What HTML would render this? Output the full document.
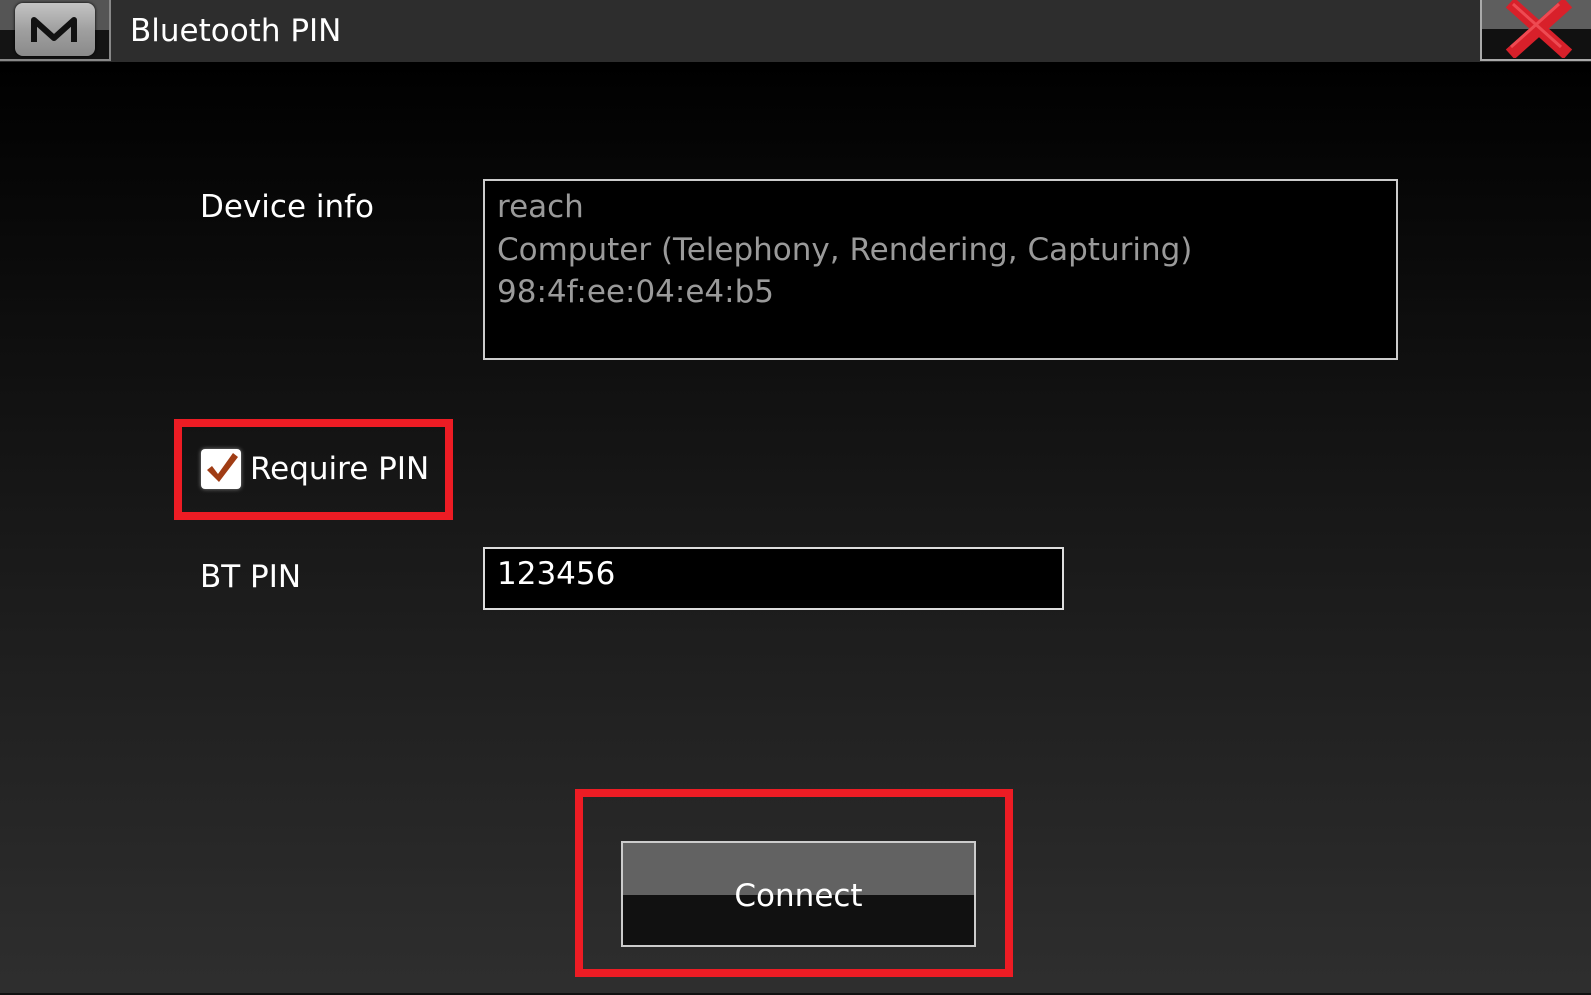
<!DOCTYPE html>
<html><head><style>
*{margin:0;padding:0;box-sizing:border-box}
body{width:1591px;height:995px;overflow:hidden;position:relative;background:linear-gradient(#000 62px,#050505 150px,#1c1c1c 600px,#2e2e2e 985px);font-family:"DejaVu Sans","Liberation Sans",sans-serif;color:#fff}
.abs{position:absolute}
.title{left:0;top:0;width:1591px;height:62px;background:#2d2d2d}
.lbl{font-size:31px;white-space:nowrap}
</style></head><body>
<div class="abs title"></div>
<div class="abs" style="left:0;top:0;width:111px;height:61px;background:linear-gradient(#555 0,#555 30px,#141414 30px);border-right:2px solid #888;border-bottom:2px solid #888"></div>
<div class="abs" style="left:15px;top:3px;width:80px;height:53px;border-radius:8px;background:linear-gradient(#c4c4c4,#a0a0a0 50%,#8a8a8a);box-shadow:0 0 3px #000"></div>
<svg class="abs" style="left:30px;top:16px" width="48" height="28" viewBox="0 0 48 28"><path d="M4 26 L4 4 L24 22 L44 4 L44 26" fill="none" stroke="#111" stroke-width="6" stroke-linejoin="round"/></svg>
<div class="abs lbl" style="left:130px;top:13px">Bluetooth PIN</div>
<div class="abs" style="left:1480px;top:0;width:111px;height:61px;background:linear-gradient(#5e5e5e 0,#5e5e5e 29px,#111 29px);border-left:2px solid #aaa;border-bottom:2px solid #aaa"></div>
<svg class="abs" style="left:1505px;top:0" width="70" height="58" viewBox="0 0 70 58"><g stroke="#d8202a" stroke-width="13" stroke-linecap="square"><line x1="10" y1="7" x2="58" y2="50"/><line x1="58" y1="7" x2="10" y2="50"/></g><g stroke="#ee4a52" stroke-width="3"><line x1="8" y1="4" x2="56" y2="47"/><line x1="54" y1="4" x2="6" y2="47"/></g></svg>

<div class="abs lbl" style="left:200px;top:189px">Device info</div>
<div class="abs" style="left:483px;top:179px;width:915px;height:181px;background:#000;border:2px solid #ccc"></div>
<div class="abs lbl" style="left:497px;top:186px;color:#9a9a9a;line-height:42.5px">reach<br>Computer (Telephony, Rendering, Capturing)<br>98:4f:ee:04:e4:b5</div>

<div class="abs" style="left:174px;top:419px;width:279px;height:101px;border:8px solid #ed1c24"></div>
<div class="abs" style="left:201px;top:449px;width:40px;height:40px;background:#fff;border-radius:4px;box-shadow:0 0 4px #888"></div>
<svg class="abs" style="left:203px;top:450px" width="38" height="36" viewBox="0 0 38 36"><path d="M4 20 L9 16 L15 24 L30 3 L35 7 L16 32 Z" fill="#a03c14"/></svg>
<div class="abs lbl" style="left:250px;top:451px">Require PIN</div>

<div class="abs lbl" style="left:200px;top:559px">BT PIN</div>
<div class="abs" style="left:483px;top:547px;width:581px;height:63px;background:#000;border:2px solid #ddd"></div>
<div class="abs lbl" style="left:497px;top:556px">123456</div>

<div class="abs" style="left:575px;top:789px;width:438px;height:188px;border:8px solid #ed1c24"></div>
<div class="abs" style="left:621px;top:841px;width:355px;height:106px;border:2px solid #ccc;background:linear-gradient(#626262 0,#626262 52px,#111 52px)"></div>
<div class="abs lbl" style="left:621px;top:878px;width:355px;text-align:center">Connect</div>
<div class="abs" style="left:0;top:993px;width:1591px;height:2px;background:#111"></div>
</body></html>
